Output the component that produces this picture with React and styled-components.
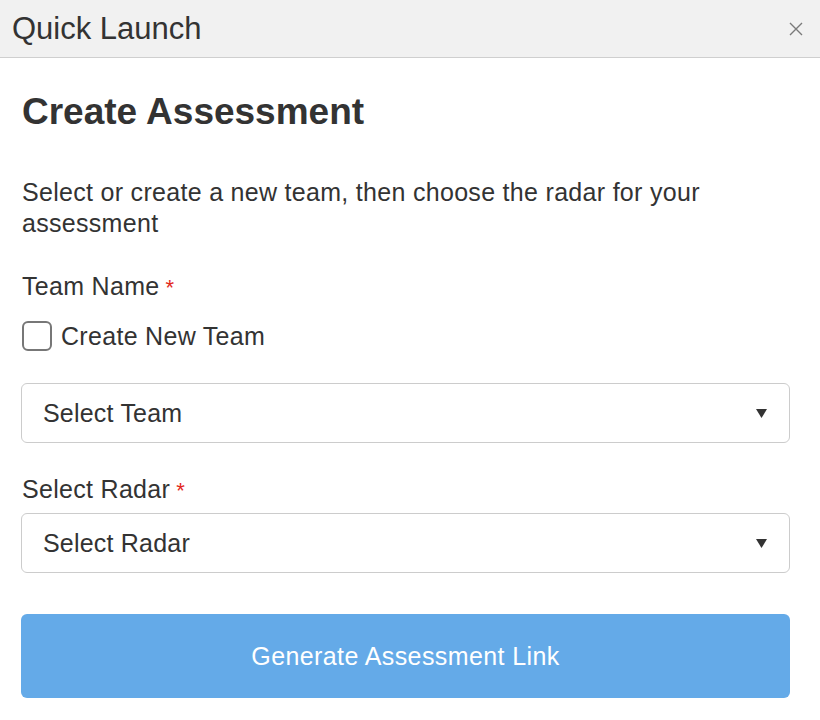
import styled, { createGlobalStyle } from "styled-components";

const GlobalStyle = createGlobalStyle`
  body {
    margin: 0;
    background: #ffffff;
    font-family: "Liberation Sans", Arial, Helvetica, sans-serif;
    color: #333333;
  }
`;

const Modal = styled.div`
  width: 820px;
  height: 720px;
  background: #ffffff;
  overflow: hidden;
`;

const Header = styled.div`
  display: flex;
  align-items: center;
  justify-content: space-between;
  height: 57px;
  padding: 0 16px 0 12px;
  background: #f1f1f1;
  border-bottom: 1px solid #cfcfcf;
`;

const HeaderTitle = styled.span`
  font-size: 31px;
  color: #333333;
`;

const CloseButton = styled.button`
  display: flex;
  align-items: center;
  justify-content: center;
  width: 16px;
  height: 16px;
  padding: 0;
  border: 0;
  background: none;
  cursor: pointer;
`;

const Body = styled.div`
  display: flex;
  flex-direction: column;
  padding: 32px 30px 0 21px;
`;

const Title = styled.h1`
  margin: 0 0 0 1px;
  font-size: 37px;
  line-height: 44px;
  font-weight: 700;
  color: #333333;
`;

const Description = styled.p`
  margin: 43px 0 0 1px;
  font-size: 25px;
  line-height: 31px;
  letter-spacing: 0.3px;
  color: #333333;
`;

const Label = styled.div`
  margin: ${({ top }) => top} 0 0 1px;
  font-size: 25px;
  line-height: 30px;
  letter-spacing: 0.3px;
  color: #333333;
`;

const Required = styled.span`
  color: #e2291c;
  margin-left: 6px;
  font-size: 22px;
`;

const CheckRow = styled.label`
  display: flex;
  align-items: center;
  gap: 9px;
  margin: 18px 0 0 1px;
  font-size: 25px;
  line-height: 30px;
  letter-spacing: 0.3px;
  color: #333333;
  cursor: pointer;
`;

const Checkbox = styled.span`
  box-sizing: border-box;
  width: 30px;
  height: 30px;
  border: 2px solid #777777;
  border-radius: 6px;
  background: #ffffff;
`;

const Select = styled.div`
  box-sizing: border-box;
  display: flex;
  align-items: center;
  justify-content: space-between;
  height: 60px;
  margin-top: ${({ top }) => top};
  padding: 0 22px 0 21px;
  border: 1px solid #cccccc;
  border-radius: 6px;
  font-size: 25px;
  letter-spacing: 0.2px;
  color: #333333;
`;

const SubmitButton = styled.button`
  height: 84px;
  margin-top: 41px;
  border: 0;
  border-radius: 6px;
  background: #64aae8;
  color: #ffffff;
  font-family: inherit;
  font-size: 25px;
  letter-spacing: 0.4px;
  cursor: pointer;
`;

function Caret() {
  return (
    <svg width="11" height="9" viewBox="0 0 11 9">
      <path d="M0 0 H11 L5.5 9 Z" fill="#333333" />
    </svg>
  );
}

export default function App() {
  return (
    <>
      <GlobalStyle />
      <Modal>
        <Header>
          <HeaderTitle>Quick Launch</HeaderTitle>
          <CloseButton aria-label="close">
            <svg width="14" height="14" viewBox="0 0 14 14">
              <path d="M1 1 L13 13 M13 1 L1 13" stroke="#7a7a7a" strokeWidth="1.4" />
            </svg>
          </CloseButton>
        </Header>
        <Body>
          <Title>Create Assessment</Title>
          <Description>
            Select or create a new team, then choose the radar for your assessment
          </Description>
          <Label top="32px">
            Team Name<Required>*</Required>
          </Label>
          <CheckRow>
            <Checkbox />
            Create New Team
          </CheckRow>
          <Select top="32px">
            Select Team
            <Caret />
          </Select>
          <Label top="31px">
            Select Radar<Required>*</Required>
          </Label>
          <Select top="7px">
            Select Radar
            <Caret />
          </Select>
          <SubmitButton>Generate Assessment Link</SubmitButton>
        </Body>
      </Modal>
    </>
  );
}
